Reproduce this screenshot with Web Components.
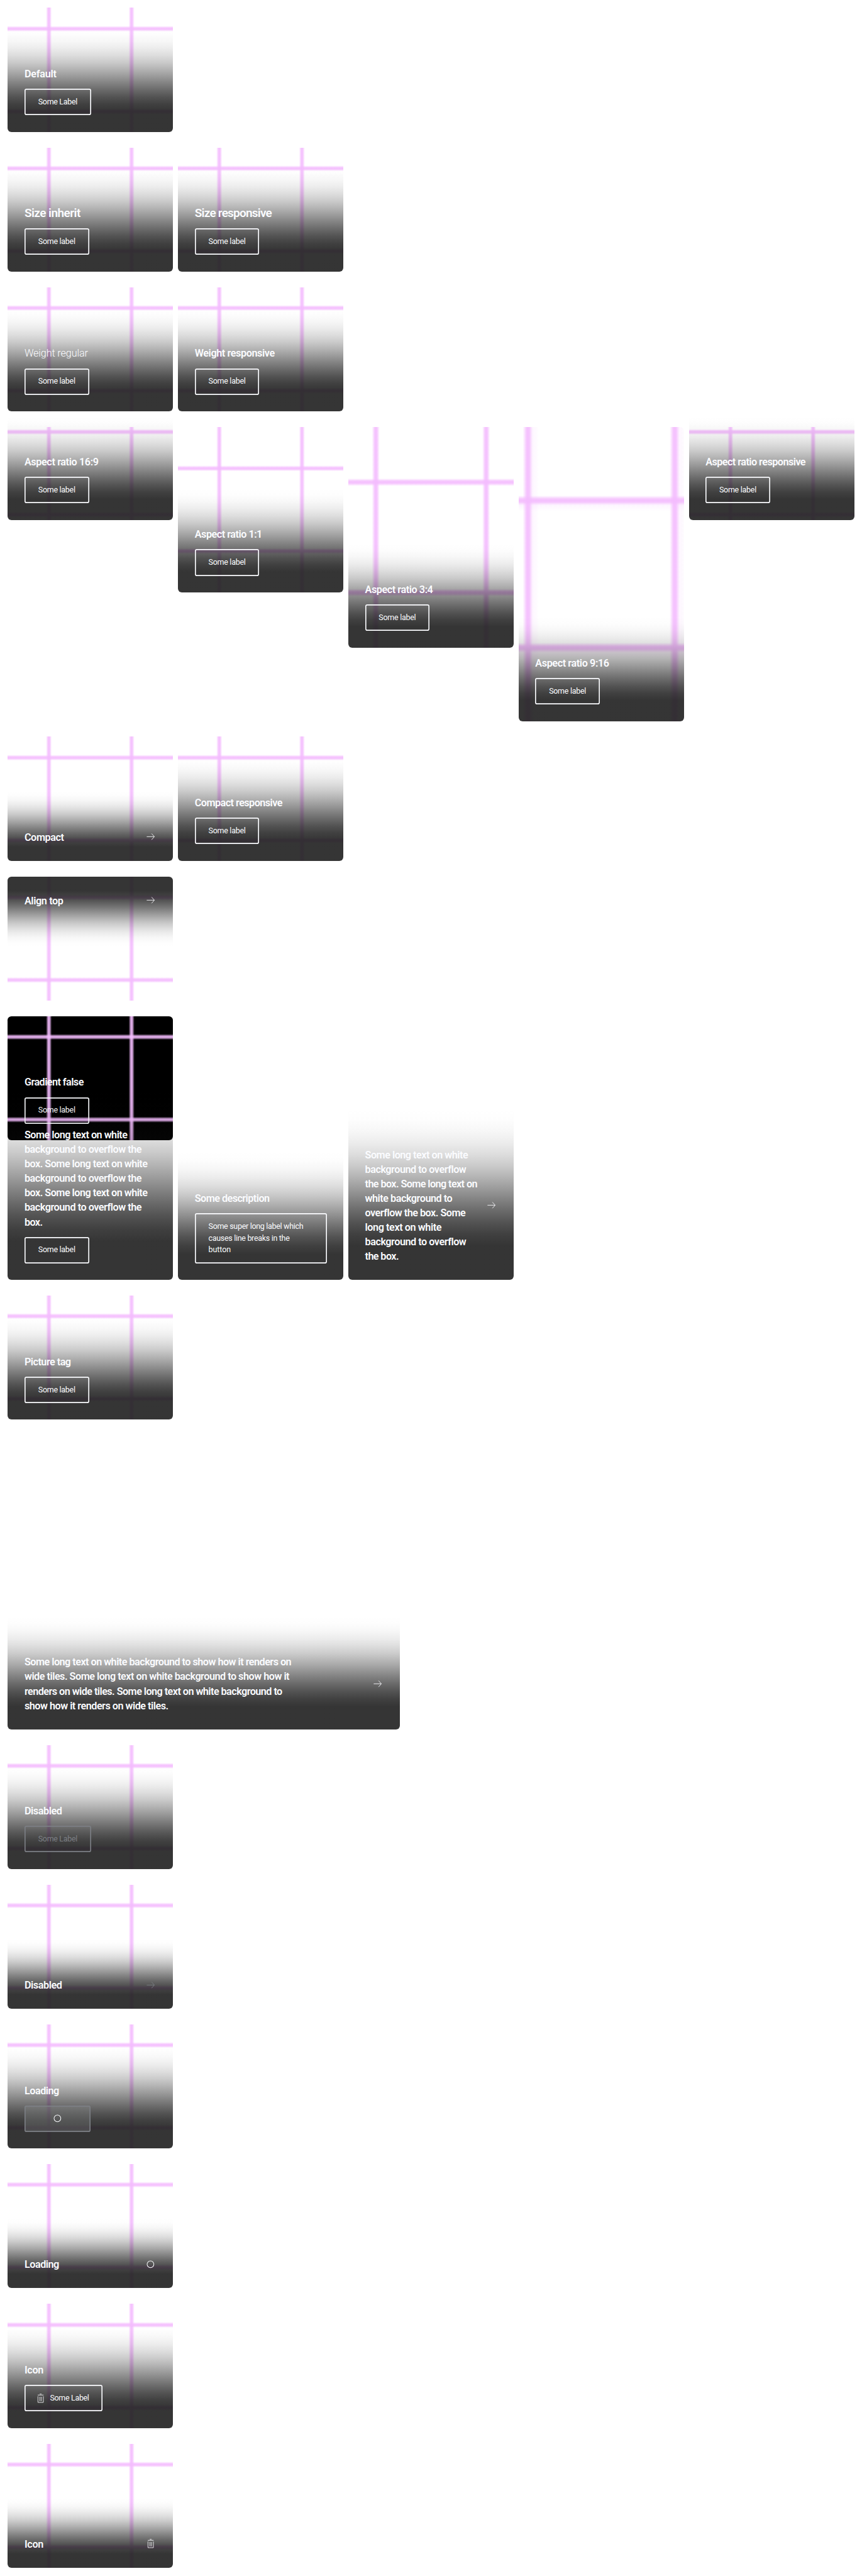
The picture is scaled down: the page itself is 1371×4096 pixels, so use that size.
<!DOCTYPE html>
<html lang="en">
<head>
<meta charset="utf-8">
<title>Button tile</title>
<style>
html{background:#fff}
body{margin:0;background:#fff}
</style>
</head>
<body>
<tile-board>
<tile-row><button-tile text="Default" widths="64" label="Some Label"></button-tile></tile-row>
<tile-row><button-tile size="inherit" text="Size inherit" widths="113" label="Some label"></button-tile><button-tile size="inherit" text="Size responsive" widths="156" label="Some label"></button-tile></tile-row>
<tile-row><button-tile weight="regular" text="Weight regular" widths="128.5" label="Some label"></button-tile><button-tile text="Weight responsive" widths="162" label="Some label"></button-tile></tile-row>
<tile-row><button-tile ratio="16/9" text="Aspect ratio 16:9" widths="150" label="Some label"></button-tile><button-tile ratio="1/1" text="Aspect ratio 1:1" widths="136.5" label="Some label"></button-tile><button-tile ratio="3/4" text="Aspect ratio 3:4" widths="137.5" label="Some label"></button-tile><button-tile ratio="9/16" text="Aspect ratio 9:16" widths="149.5" label="Some label"></button-tile><button-tile ratio="16/9" text="Aspect ratio responsive" widths="203" label="Some label"></button-tile></tile-row>
<tile-row><button-tile compact text="Compact" widths="79.5"></button-tile><button-tile text="Compact responsive" widths="177.7" label="Some label"></button-tile></tile-row>
<tile-row><button-tile compact top text="Align top" widths="78"></button-tile></tile-row>
<tile-row><button-tile plain text="Gradient false" widths="119.5" label="Some label"></button-tile></tile-row>
<tile-row><button-tile blank text="Some long text on white|background to overflow the|box. Some long text on white|background to overflow the|box. Some long text on white|background to overflow the|box." widths="209,237.5,250,237.5,250,237.5,35.5" label="Some label"></button-tile><button-tile blank text="Some description" widths="151.5" label="Some super long label which|causes line breaks in the|button" label-widths="192.5,164.5,44.5"></button-tile><button-tile blank compact text="Some long text on white|background to overflow|the box. Some long text on|white background to|overflow the box. Some|long text on white|background to overflow|the box." widths="209,205,228,177,203.5,155,205,67.5"></button-tile></tile-row>
<tile-row><button-tile text="Picture tag" widths="93.5" label="Some label"></button-tile></tile-row>
<tile-row><button-tile blank wide compact text="Some long text on white background to show how it renders on|wide tiles. Some long text on white background to show how it|renders on wide tiles. Some long text on white background to|show how it renders on wide tiles." widths="543.5,539.5,525,292.5"></button-tile></tile-row>
<tile-row><button-tile disabled text="Disabled" widths="75.5" label="Some Label"></button-tile></tile-row>
<tile-row><button-tile disabled compact text="Disabled" widths="75.5"></button-tile></tile-row>
<tile-row><button-tile loading text="Loading" widths="69.5"></button-tile></tile-row>
<tile-row><button-tile loading compact text="Loading" widths="69.5"></button-tile></tile-row>
<tile-row><button-tile icon="delete" text="Icon" widths="37.5" label="Some Label"></button-tile></tile-row>
<tile-row><button-tile icon="delete" compact text="Icon" widths="37.5"></button-tile></tile-row>
</tile-board>
<script>
class TileBoard extends HTMLElement{
  constructor(){
    super();
    this.attachShadow({mode:'open'}).innerHTML=`<style>
:host{display:flex;flex-direction:column;gap:32px;padding:16px 16px 14px;zoom:.7791}
</style><slot></slot>`;
  }
}
class TileRow extends HTMLElement{
  constructor(){
    super();
    this.attachShadow({mode:'open'}).innerHTML=`<style>
:host{display:flex;align-items:flex-start;gap:10px}
</style><slot></slot>`;
  }
}
class TileIcon extends HTMLElement{
  connectedCallback(){
    const shapes={
      arrow:'<path d="M4.300 12h15.5M14.300 5.700 20 12l-5.700 6.300"/>',
      spinner:'<circle cx="12" cy="12" r="6.900" stroke-width="1.300"/>',
      delete:'<path d="M6.900 8v12.500h11v-12.500M6.400 5.500h12M10.400 3.500h4M10.900 9v9M13.900 9v9"/>'
    };
    this.attachShadow({mode:'open'}).innerHTML=`<style>
:host{display:block;flex:none;width:24px;height:24px}
svg{display:block;width:24px;height:24px;fill:none;stroke:currentColor;stroke-width:1.100}
</style><svg viewBox="0 0 24 24">${shapes[this.getAttribute('name')]}</svg>`;
  }
}
/* Eased scrim: opacity at each position. */
const SCRIM=[[.9,20],[.852589,26.67],[.768225,33.33],[.668116,40],[.557309,46.67],[.442691,53.33],[.331884,60],[.231775,66.67],[.147411,73.33],[.0816599,80],[.03551,86.67],[.0086472,93.33],[0,100]]
  .map(([a,p])=>`rgba(31,31,31,${a}) ${p}%`).join(',');
/* A glowing line centred on `at` percent of the picture; `haze` adds a faint trailing edge. */
const line=(dir,at,haze)=>{
  const stops=[[-1.75,0],[-1.15,.4],[-.6,.8],[0,.94],[.6,.8],[1.15,.4]].concat(haze?[[1.65,.13],[2.6,.08],[3.7,0]]:[[1.75,0]]);
  return `linear-gradient(${dir},${stops.map(([d,a])=>`rgba(244,188,254,${a}) ${at+d}%`).join(',')})`;
};
const picture=haze=>['to right','to bottom'].flatMap(d=>[line(d,25,haze),line(d,75,haze)]).join(',');
const LABEL_WIDTHS={'Some label':'74.7','Some Label':'78.8'};
class ButtonTile extends HTMLElement{
  connectedCallback(){
    const has=n=>this.hasAttribute(n), get=n=>this.getAttribute(n)||'';
    const lines=(text,widths)=>{
      const w=widths.split(',');
      return text.split('|').map((t,i)=>`<span class="line" data-w="${w[i]}">${t}</span>`).join(' ');
    };
    const compact=has('compact'), top=has('top');
    const icon=has('loading')?'spinner':has('icon')?'delete':compact?'arrow':'';
    const iconTag=icon?`<tile-icon name="${icon}"></tile-icon>`:'';
    const ratio=get('ratio')||'4/3';
    const [rw,rh]=ratio.split('/').map(Number);
    const width=has('wide')?800:337.6;
    const label=get('label');
    const labelTag=label?`<span>${lines(label,get('label-widths')||LABEL_WIDTHS[label])}</span>`:'';
    const button=compact?iconTag:`<span class="button">${iconTag}${labelTag}</span>`;
    const root=this.attachShadow({mode:'open'});
    root.innerHTML=`<style>
:host{display:block;width:${width}px;flex:none;color:#fbfcff;font-family:Roboto,"Liberation Sans",sans-serif}
.tile{display:grid;width:100%;aspect-ratio:${ratio}}
.tile>*{grid-area:1/1;min-width:0}
.picture{display:flex;align-items:center;justify-content:center;height:100%;overflow:hidden;border-radius:8px;${has('plain')?'background:#000':''}}
.picture div{flex:none;width:${337.6*Math.max(1,rh/rw)}px;aspect-ratio:1;background:${picture(ratio==='9/16')}}
.body{align-self:${top?'start':'end'};height:0;display:flex;flex-direction:column;justify-content:${top?'flex-start':'flex-end'};z-index:1}
.content{flex:none;box-sizing:border-box;display:flex;flex-direction:${compact?'row':'column'};${compact?'justify-content:space-between;align-items:center':'align-items:flex-start'};gap:16px;
 padding:${top?'34px 34px 80px':'80px 34px 34px'};
 border-radius:${top?'8px 8px 0 0':'0 0 8px 8px'};
 ${has('plain')?'':`background:linear-gradient(to ${top?'bottom':'top'},${SCRIM})`}}
p{margin:0;padding-top:.5px;margin-bottom:-.5px;font-weight:${get('weight')==='regular'?350:600};font-size:${get('size')?24.4:20.8}px;line-height:${get('size')?33:29.6}px}
.line{display:block;width:max-content;white-space:nowrap}
.button{box-sizing:border-box;display:inline-flex;gap:8px;align-items:center;${label.includes('|')?'width:100%;':'justify-content:center;'}min-height:54px;box-shadow:inset 0 0 0 2.1px var(--edge,currentColor);border-radius:4px;padding:15px 28px 15px ${icon==='delete'?20:28}px;font-size:16px;line-height:24px}
.button .line{font-weight:400}
${has('disabled')?'.button,tile-icon{color:#7c7f85}':''}
${has('loading')?'.button{width:135px;--edge:#7c7f85;background:rgba(148,149,152,.26)}':''}
</style><div class="tile"><div class="picture">${has('blank')?'':'<div></div>'}</div><div class="body"><div class="content"><p>${lines(get('text'),get('widths'))}</p>${button}</div></div></div>`;
    /* Track each line out to its set width. */
    const unit=this.getBoundingClientRect().width/width;
    for(const s of root.querySelectorAll('.line')){
      const gap=+s.dataset.w+1-s.getBoundingClientRect().width/unit;
      s.style.letterSpacing=(gap/s.textContent.length).toFixed(3)+'px';
    }
  }
}
customElements.define('tile-board',TileBoard);
customElements.define('tile-row',TileRow);
customElements.define('tile-icon',TileIcon);
customElements.define('button-tile',ButtonTile);
</script>
</body>
</html>
